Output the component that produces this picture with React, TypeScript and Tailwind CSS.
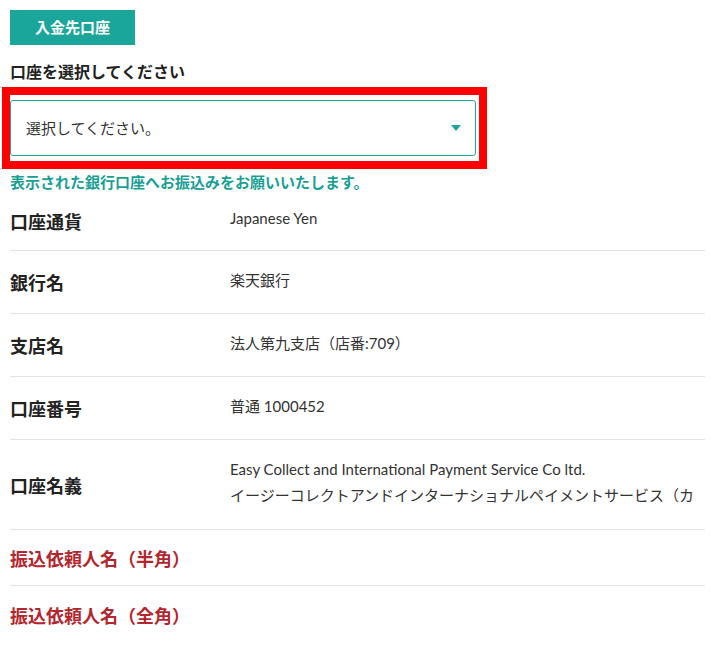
const jp = "font-['Lato','Noto_Sans_CJK_JP',sans-serif]"

const rows = [
  { label: "口座通貨", value: ["Japanese Yen"], h: "h-[60px]" },
  { label: "銀行名", value: ["楽天銀行"], h: "h-[63px]" },
  { label: "支店名", value: ["法人第九支店（店番:709）"], h: "h-[63px]" },
  { label: "口座番号", value: ["普通 1000452"], h: "h-[63px]" },
  {
    label: "口座名義",
    value: [
      "Easy Collect and International Payment Service Co ltd.",
      "イージーコレクトアンドインターナショナルペイメントサービス（カ",
    ],
    h: "h-[90px]",
  },
]

export default function App() {
  return (
    <div className={`${jp} min-h-screen bg-white px-[10px] pt-[10px] text-[#222] overflow-hidden`}>
      <div className="flex h-[35px] w-[125px] items-center justify-center bg-[#1ba69b] text-[15px] font-bold text-white">
        入金先口座
      </div>

      <div className="mt-[17px] text-[16px] font-bold leading-[20px] text-[#222]">口座を選択してください</div>

      <div className="-ml-[8px] mt-[5px] w-[485px] border-[8px] border-[#ff0000] pb-[5px] pr-[3px] pt-[5px]">
        <div className="flex h-[56px] items-center justify-between rounded-[3px] border border-[#1ba69b] pl-[15px] pr-[14px]">
          <span className="text-[15px] text-[#333]">選択してください。</span>
          <svg width="10" height="6" viewBox="0 0 10 6">
            <path d="M0 0 L10 0 L5 6 Z" fill="#1ba69b" />
          </svg>
        </div>
      </div>

      <div className="mt-[4px] text-[15px] font-bold leading-[18px] text-[#1a9f95]">
        表示された銀行口座へお振込みをお願いいたします。
      </div>

      <div className="w-[695px]">
        {rows.map((r, i) => (
          <div key={i} className={`flex items-center border-b border-[#e3e3e3] ${r.h}`}>
            <div className="w-[220px] shrink-0 pt-[2px] text-[18px] font-bold leading-[24px]">{r.label}</div>
            <div className="flex flex-col gap-[6px] whitespace-nowrap pb-[5px] text-[15px] leading-[20px] text-[#333]">
              {r.value.map((v, j) => (
                <span key={j}>{v}</span>
              ))}
            </div>
          </div>
        ))}
        <div className="flex h-[56px] items-center border-b border-[#e3e3e3]">
          <div className="pt-[3px] text-[18px] font-bold leading-[24px] text-[#b3262d]">振込依頼人名（半角）</div>
        </div>
        <div className="flex h-[60px] items-center">
          <div className="text-[18px] font-bold leading-[24px] text-[#b3262d]">振込依頼人名（全角）</div>
        </div>
      </div>
    </div>
  )
}
